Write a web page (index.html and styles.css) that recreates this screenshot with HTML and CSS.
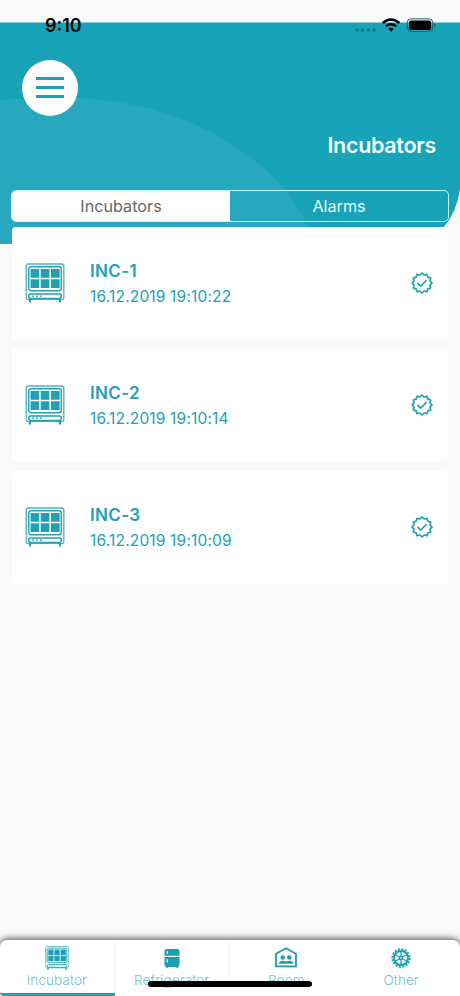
FILE: index.html
```html
<!DOCTYPE html>
<html lang="en">
<head>
<meta charset="utf-8">
<title>Incubators</title>
<link rel="stylesheet" href="styles.css">
</head>
<body>
<svg class="defs" width="0" height="0" aria-hidden="true">
  <symbol id="incubator" viewBox="0 0 40 40">
    <g fill="none" stroke="currentColor">
      <path d="M1.200 28V3q0-2 2-2h33.600q2 0 2 2V28" stroke-width="1.400" opacity=".8"/>
      <rect x="3.700" y="3.700" width="32.600" height="24" rx="2.500" stroke-width="1.400"/>
      <path d="M1.200 28v6.500q0 2 2 2h33.600q2 0 2-2V28" stroke-width="1.200" opacity=".8"/>
      <rect x="3.700" y="31" width="32.600" height="4.500" rx="2" stroke-width="1.500"/>
      <path d="M7 33.200h2m2 0h2m2 0h2" stroke-width="1.200"/>
      <path d="M5 36v3.500M35 36v3.500" stroke-width="2.200"/>
    </g>
    <path fill="currentColor" d="M5.500 6h8.700v8.800H5.500zM15.700 6h8.700v8.800h-8.700zM26 6h8.700v8.800H26zM5.500 16.200h8.700V25H5.500zM15.700 16.200h8.700V25h-8.700zM26 16.200h8.700V25H26z"/>
  </symbol>
  <symbol id="verified" viewBox="-11 -11 22 22">
    <path fill="none" stroke="currentColor" stroke-width="1.700" stroke-linejoin="round" d="M0-10 2.150-8 5-8.660 5.870-5.870 8.660-5 8-2.150 10 0 8 2.150 8.660 5 5.870 5.870 5 8.660 2.150 8 0 10-2.150 8-5 8.660-5.870 5.870-8.660 5-8 2.150-10 0-8-2.150-8.660-5-5.870-5.870-5-8.660-2.150-8z"/>
    <path fill="none" stroke="currentColor" stroke-width="1.700" d="M-4.500-.1-1.300 3 4.700-3"/>
  </symbol>
</svg>
<div class="app">
  <svg class="backdrop" viewBox="0 0 460 222" aria-hidden="true">
    <path fill="#19a3b9" d="M0 .4H460V167Q457 190 443 206Q430 222 400 222H0Z"/>
    <path fill="#27a8be" d="M0 78C55 73 115 75 165 91C232 112 292 160 309 209V222H0Z"/>
  </svg>
  <div class="status">
    <span class="time">9:10</span>
    <svg class="signals" width="82" height="16" viewBox="0 0 82 16">
      <g fill="#087486"><circle cx="3" cy="12" r="1.700"/><circle cx="8.600" cy="12" r="1.700"/><circle cx="14.300" cy="12" r="1.700"/><circle cx="20" cy="12" r="1.700"/></g>
      <g fill="none" stroke="#000" stroke-width="2.500"><path d="M28.700 5Q37-2.100 45.300 5"/><path d="M31.900 8.400Q37 4.100 42.100 8.400"/></g>
      <path d="M34.300 10.800Q37 8.600 39.700 10.800L37 13.700z"/>
      <rect x="53.300" y=".9" width="25.400" height="12.600" rx="3.500" fill="none" stroke="#20606a" stroke-width="1"/>
      <rect x="55" y="2.600" width="22" height="9.300" rx="2"/>
      <path fill="#20606a" d="M80 5.300q1.600.5 1.600 2t-1.600 2z"/>
    </svg>
  </div>
  <button class="menu" aria-label="Menu"><i></i><i></i><i></i></button>
  <h1>Incubators</h1>
  <div class="segments"><span class="selected">Incubators</span><span>Alarms</span></div>
  <main>
    <article>
      <svg class="unit"><use href="#incubator"/></svg>
      <div class="info"><h2>INC-1</h2><p>16.12.2019 19:10:22</p></div>
      <svg class="check"><use href="#verified"/></svg>
    </article>
    <article>
      <svg class="unit"><use href="#incubator"/></svg>
      <div class="info"><h2>INC-2</h2><p>16.12.2019 19:10:14</p></div>
      <svg class="check"><use href="#verified"/></svg>
    </article>
    <article>
      <svg class="unit"><use href="#incubator"/></svg>
      <div class="info"><h2>INC-3</h2><p>16.12.2019 19:10:09</p></div>
      <svg class="check"><use href="#verified"/></svg>
    </article>
  </main>
  <nav>
    <a class="active"><svg class="tab-icon"><use href="#incubator"/></svg><span>Incubator</span></a>
    <a><svg class="tab-icon" viewBox="0 0 24 24"><path fill="currentColor" d="M6.500 3h11q2 0 2 2v4.700h-15V5q0-2 2-2zM4.500 11h15v8q0 1.700-1.500 1.700v1h-2v-.7H8v.7H6v-1q-1.500 0-1.500-1.700z"/><path stroke="#fff" stroke-width="1.300" d="M7.300 5.300v2.400m0 5.500v3"/></svg><span>Refrigerator</span></a>
    <a><svg class="tab-icon" viewBox="0 0 24 24"><path fill="none" stroke="currentColor" stroke-width="1.800" d="M2 20.400V7.700L12 2.200l10 5.500v12.700z"/><g fill="currentColor"><circle cx="8.700" cy="11.500" r="2.300"/><circle cx="15.300" cy="11.500" r="2.300"/><path d="M4.800 17.700q0-3 3.900-3 2 0 3.300.8 1.300-.8 3.300-.8 3.900 0 3.900 3z"/></g></svg><span>Room</span></a>
    <a class="other"><svg class="tab-icon" viewBox="0 0 24 24"><g fill="none" stroke="currentColor"><circle cx="12" cy="12" r="8.700" stroke-width="2" stroke-dasharray="2.100 1.317"/><circle cx="12" cy="12" r="7" stroke-width="2"/><path stroke-width="1.300" d="M12 5v14M5.900 8.500l12.200 7M18.100 8.500l-12.200 7"/></g><circle cx="12" cy="12" r="2.200" fill="currentColor"/><circle cx="12" cy="12" r=".8" fill="#fff"/></svg><span>Other</span></a>
    <div class="home"></div>
  </nav>
</div>
</body>
</html>
```
FILE: styles.css
```css
* { box-sizing: border-box; }
body { margin: 0; background: #f9f9f9; font-family: Inter, "Liberation Sans", sans-serif; color: #20a0b3; }
h1, h2, p { margin: 0; }
.defs { position: absolute; }
.app { position: relative; isolation: isolate; width: 460px; height: 996px; display: flex; flex-direction: column; overflow: hidden; }
.backdrop { position: absolute; z-index: -1; top: 22px; left: 0; width: 460px; height: 222px; }
.status { height: 60px; padding: 15px 24px 0 45px; display: flex; justify-content: space-between; align-items: flex-start; color: #000; }
.time { font-size: 18px; line-height: 22px; font-weight: 600; }
.signals { margin-top: 3px; }
.menu { width: 56px; height: 56px; margin: 0 0 0 22px; padding: 0 0 1px; border: 0; border-radius: 50%; background: #fff; display: flex; flex-direction: column; align-items: center; justify-content: center; gap: 6px; }
.menu i { width: 28px; height: 3px; background: #20a0b5; }
h1 { height: 74px; padding: 15px 24px 0 0; text-align: right; font-size: 21.500px; line-height: 29px; font-weight: 600; letter-spacing: -.3px; color: #f3ffff; }
.segments { height: 32px; margin: 0 11px; display: flex; border: 1px solid #c4f7fb; border-radius: 5px; overflow: hidden; }
.segments span { flex: 1 1 0; text-align: center; font-size: 16.200px; line-height: 31px; color: #e3fcff; }
.segments .selected { background: #fff; color: #666; }
main { flex: 1; padding: 5px 12px 0; display: flex; flex-direction: column; gap: 10px; }
article { height: 112.200px; padding: 0 15px 0 13px; display: flex; align-items: center; background: #fff; border-radius: 4px; }
.unit { width: 40px; height: 40px; }
.info { flex: 1; padding: 1px 0 0 25px; }
h2 { font-size: 17px; line-height: 25px; font-weight: 600; letter-spacing: .35px; }
p { font-size: 15.500px; line-height: 25px; letter-spacing: .17px; }
.check { width: 22px; height: 22px; }
nav { position: relative; height: 56px; display: flex; background: #fff; border-radius: 7px 7px 0 0; box-shadow: 0 -1px 7px #444; }
nav a { flex: 1; padding-top: 6px; display: flex; flex-direction: column; align-items: center; border-bottom: 3px solid transparent; font-size: 13.500px; line-height: 20px; color: #19a0b4; }
nav a:nth-of-type(-n+2) { box-shadow: inset -1px 0 #f5f5f5; }
nav a.active { border-bottom-color: #18a3b8; border-bottom-left-radius: 4px; }
nav .other { padding-right: 1px; }
nav span { margin-right: 1px; font-weight: 300; letter-spacing: .1px; color: #70c4cb; }
.tab-icon { width: 24px; height: 24px; flex: none; margin-right: 1px; }
.home { position: absolute; left: 148px; top: 41px; width: 164px; height: 6px; border-radius: 3px; background: #000; }
```
